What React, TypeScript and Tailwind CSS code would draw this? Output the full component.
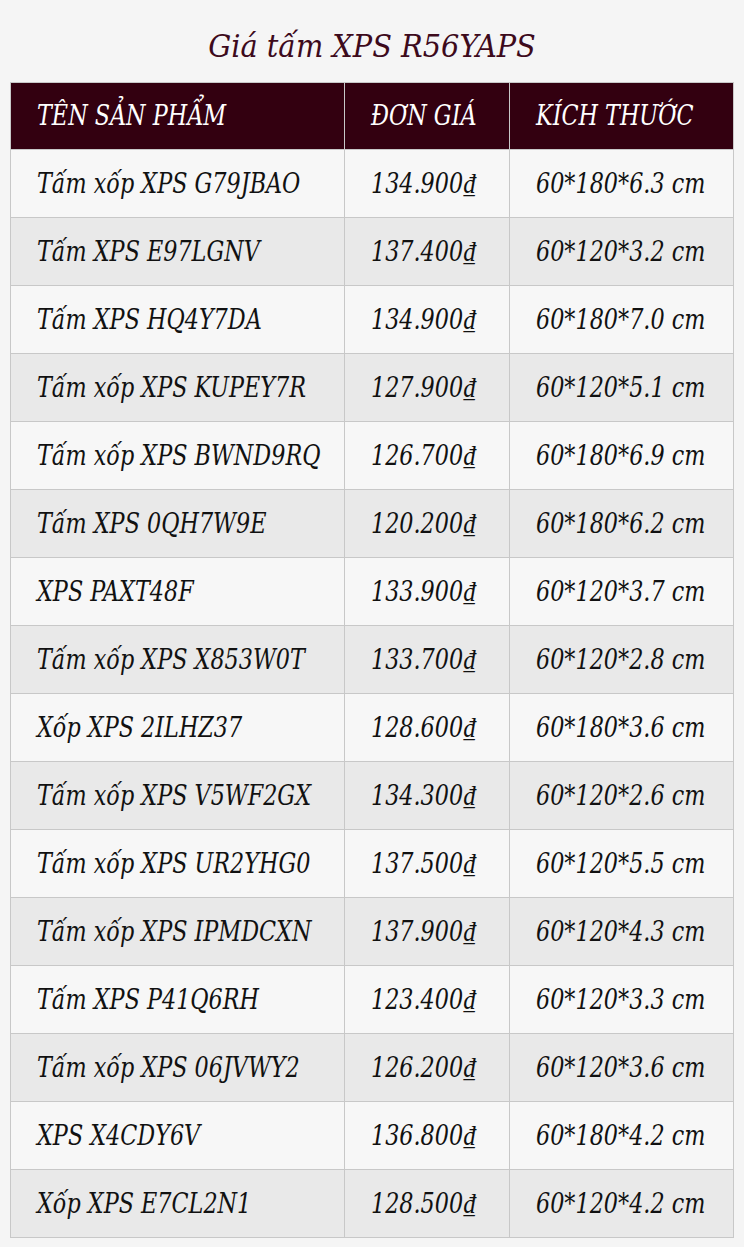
import React from "react";

const rows: [string, string, string][] = [
  ["Tấm xốp XPS G79JBAO", "134.900₫", "60*180*6.3 cm"],
  ["Tấm XPS E97LGNV", "137.400₫", "60*120*3.2 cm"],
  ["Tấm XPS HQ4Y7DA", "134.900₫", "60*180*7.0 cm"],
  ["Tấm xốp XPS KUPEY7R", "127.900₫", "60*120*5.1 cm"],
  ["Tấm xốp XPS BWND9RQ", "126.700₫", "60*180*6.9 cm"],
  ["Tấm XPS 0QH7W9E", "120.200₫", "60*180*6.2 cm"],
  ["XPS PAXT48F", "133.900₫", "60*120*3.7 cm"],
  ["Tấm xốp XPS X853W0T", "133.700₫", "60*120*2.8 cm"],
  ["Xốp XPS 2ILHZ37", "128.600₫", "60*180*3.6 cm"],
  ["Tấm xốp XPS V5WF2GX", "134.300₫", "60*120*2.6 cm"],
  ["Tấm xốp XPS UR2YHG0", "137.500₫", "60*120*5.5 cm"],
  ["Tấm xốp XPS IPMDCXN", "137.900₫", "60*120*4.3 cm"],
  ["Tấm XPS P41Q6RH", "123.400₫", "60*120*3.3 cm"],
  ["Tấm xốp XPS 06JVWY2", "126.200₫", "60*120*3.6 cm"],
  ["XPS X4CDY6V", "136.800₫", "60*180*4.2 cm"],
  ["Xốp XPS E7CL2N1", "128.500₫", "60*120*4.2 cm"],
];

const font = "font-['DejaVu_Serif_Condensed','DejaVu_Serif',serif] italic";

// condensed glyphs: the reference face is taller and narrower than DejaVu
function Txt({ children }: { children: React.ReactNode }) {
  return <span className="inline-block origin-left scale-x-[0.885] whitespace-nowrap">{children}</span>;
}

export default function App() {
  return (
    <main className={`min-h-[1247px] bg-[#f5f5f5] px-[10px] pt-[24px] ${font}`}>
      <h1 className="text-center text-[32px] leading-[44px] text-[#3d0a1c] mb-[14px]">
        Giá tấm XPS R56YAPS
      </h1>
      <table className="w-full table-fixed border-collapse text-[28px] leading-none">
        <colgroup>
          <col className="w-[334px]" />
          <col className="w-[165px]" />
          <col />
        </colgroup>
        <thead>
          <tr className="bg-[#330010] text-white">
            <th className="h-[67px] overflow-hidden border border-[#c8c8c8] pl-[26px] text-left font-normal"><Txt>TÊN SẢN PHẨM</Txt></th>
            <th className="overflow-hidden border border-[#c8c8c8] pl-[26px] text-left font-normal"><Txt>ĐƠN GIÁ</Txt></th>
            <th className="overflow-hidden border border-[#c8c8c8] pl-[26px] text-left font-normal"><Txt>KÍCH THƯỚC</Txt></th>
          </tr>
        </thead>
        <tbody>
          {rows.map(([name, price, size], i) => (
            <tr key={i} className={i % 2 === 0 ? "bg-[#f7f7f7]" : "bg-[#e9e9e9]"}>
              <td className="h-[68px] overflow-hidden border border-[#c8c8c8] pl-[26px] text-[#111]"><Txt>{name}</Txt></td>
              <td className="overflow-hidden border border-[#c8c8c8] pl-[26px] text-[#111]"><Txt>{price}</Txt></td>
              <td className="overflow-hidden border border-[#c8c8c8] pl-[26px] text-[#111]"><Txt>{size}</Txt></td>
            </tr>
          ))}
        </tbody>
      </table>
    </main>
  );
}
